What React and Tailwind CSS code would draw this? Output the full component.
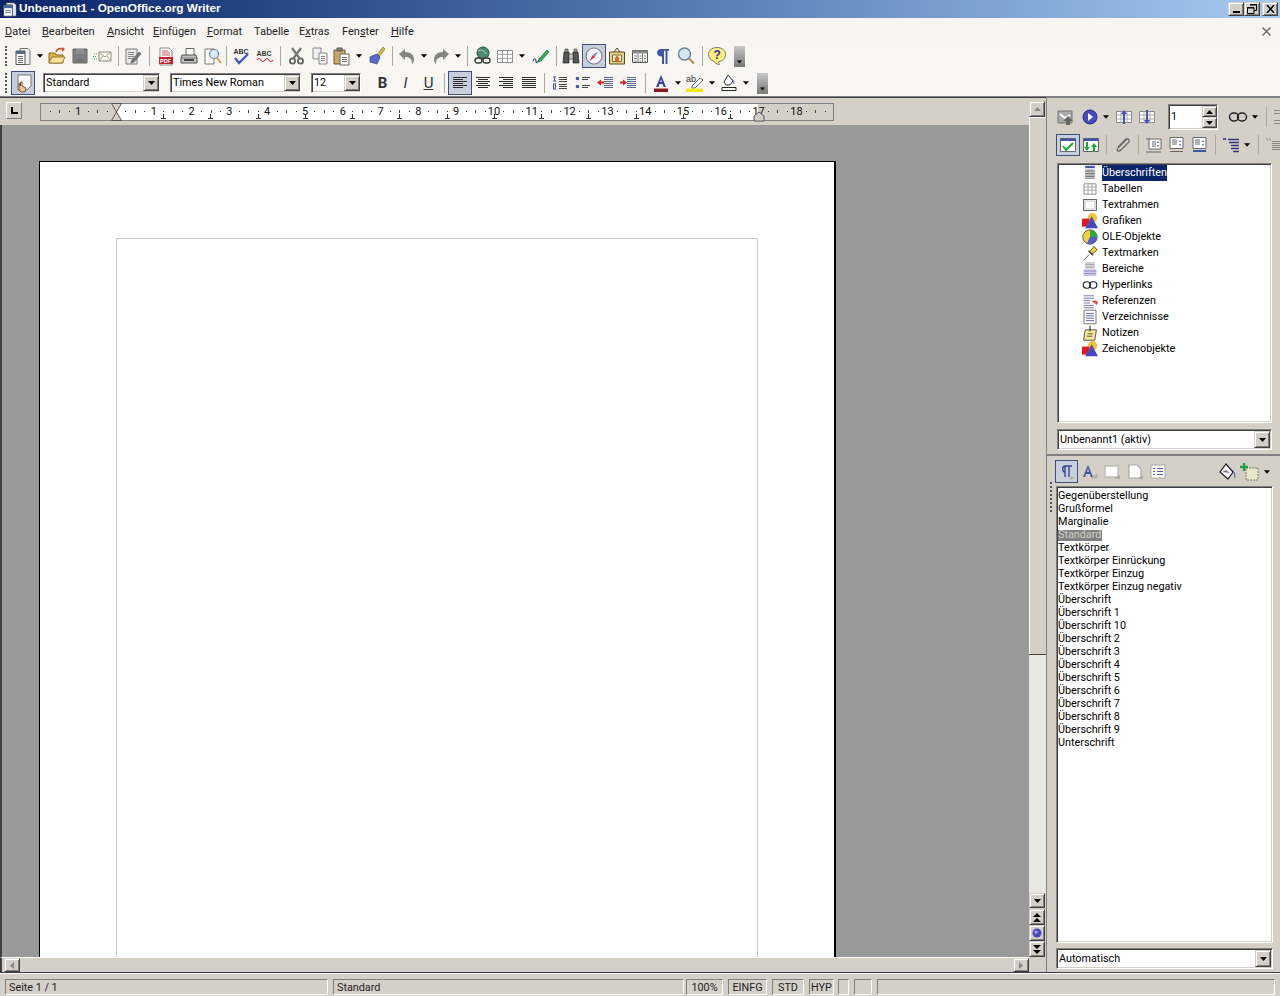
import React from "react";

const raised = "bg-[#d4d0c8] border border-t-[#d4d0c8] border-l-[#d4d0c8] border-r-[#404040] border-b-[#404040] shadow-[inset_1px_1px_0_#fff,inset_-1px_-1px_0_#808080]";
const sunken = "bg-white border border-t-[#808080] border-l-[#808080] border-r-white border-b-white shadow-[inset_1px_1px_0_#404040,inset_-1px_-1px_0_#d4d0c8]";
const active = "bg-[#c8cedb] border border-[#3f4f7c]";

const S = ({ children, s = 20, v = 20 }) => (
  <svg width={s} height={s} viewBox={`0 0 ${v} ${v}`} fill="none" className="block shrink-0">{children}</svg>
);
const Tri = ({ c = "#000", w = 7 }) => (
  <svg width={w} height="4" viewBox="0 0 7 4" className="block"><path d="M0 0h7L3.5 4z" fill={c} /></svg>
);

const Lines = ({ x, y, w, n, d = 2, c = "#555" }) => (
  <path d={Array.from({ length: n }, (_, i) => `M${x} ${y + i * d + 0.5}h${w}`).join("")} stroke={c} />
);

const IconNew = () => (
  <S><path d="M7 2.5h8l2 2v14H7z" fill="#eee" stroke="#777" /><path d="M3 5h9v13.5H3z" fill="#fff" stroke="#555" /><path d="M3 5h9v3H3z" fill="#5a6a84" /><Lines x={5} y={10} w={5} n={4} c="#667" /></S>
);
const IconOpen = () => (
  <S><path d="M2 7h6l1 2h7v8H2z" fill="#e0b04a" stroke="#8a6a20" /><path d="M2 17l3-6h13l-3 6z" fill="#fbe39a" stroke="#9a7a30" /><path d="M9 6c1-3 4-4 6-3" stroke="#d24a2a" strokeWidth="1.6" /><path d="M15 1l3 2-3 3z" fill="#d24a2a" /></S>
);
const IconSave = () => (
  <S><path d="M3 3h14v14H3z" fill="#7d7d7d" stroke="#6b6b6b" /><path d="M6 3h8v5H6z" fill="#8e8e8e" /><path d="M6 12h8v5H6z" fill="#747474" /></S>
);
const IconMail = () => (
  <S><path d="M6 6h12v9H6z" fill="#fffbe8" stroke="#888" /><path d="M6 6l6 5 6-5M6 15l4-5M18 15l-4-5" stroke="#999" /><path d="M1 8h3M0 10.500h4M1 13h3" stroke="#35c24a" strokeWidth="1.2" strokeDasharray="1 1" /></S>
);
const IconEdit = () => (
  <S><path d="M3 3h11v15H3z" fill="#e8e8e8" stroke="#7a7a7a" /><Lines x={5} y={6} w={6} n={4} d={2} c="#888" /><path d="M9 14l7-8 2 2-7 8-3 1z" fill="#777" stroke="#555" strokeWidth=".6" /></S>
);
const IconPdf = () => (
  <S><path d="M4 2h9l3 3v14H4z" fill="#fff" stroke="#888" /><path d="M6 5h6M6 7h8M6 9h8" stroke="#c55" /><path d="M3 11h14v7H3z" fill="#c8202a" /><text x="4" y="17" fontSize="5.500" fontWeight="700" fill="#fff" fontFamily="Liberation Sans">PDF</text></S>
);
const IconPrint = () => (
  <S><path d="M7 2.500h8v7H7z" fill="#fff" stroke="#666" /><path d="M3 9h14l1 3v5H2v-5z" fill="#c2c2c2" stroke="#555" /><path d="M2 12h16" stroke="#777" /><path d="M5 14h10" stroke="#444" strokeWidth="2" /></S>
);
const IconPreview = () => (
  <S><path d="M3 3h9v15H3z" fill="#fff" stroke="#777" /><circle cx="12" cy="8" r="4.500" fill="#d6ecf8" stroke="#6b7f95" strokeWidth="1.200" /><path d="M15 12l4 5" stroke="#caa24a" strokeWidth="2" /></S>
);
const IconSpell = () => (
  <S><text x="1.500" y="7.500" fontSize="7" fontWeight="700" fill="#333" fontFamily="Liberation Sans">ABC</text><path d="M3 12l4 5 9-9" stroke="#4a58c8" strokeWidth="2.400" /></S>
);
const IconAuto = () => (
  <S><text x="1.500" y="10" fontSize="7" fontWeight="700" fill="#333" fontFamily="Liberation Sans">ABC</text><path d="M2 14q2-3 4 0t4 0 4 0 4 0" stroke="#d03a3a" strokeWidth="1.200" /></S>
);
const IconCut = () => (
  <S><path d="M5 2l8 11M14 2L6 13" stroke="#777" strokeWidth="2.200" /><circle cx="5.500" cy="15" r="2.600" stroke="#666" strokeWidth="1.800" /><circle cx="13.500" cy="15" r="2.600" stroke="#666" strokeWidth="1.800" /></S>
);
const IconCopy = () => (
  <S><path d="M3 2h8v11H3z" fill="#eee" stroke="#8a8a8a" /><path d="M9 7h8v11H9z" fill="#f6f6f6" stroke="#8a8a8a" /><Lines x={11} y={10} w={4} n={3} c="#888" /></S>
);
const IconPaste = () => (
  <S><path d="M2 4h11v14H2z" fill="#c9a96a" stroke="#6b5a35" /><path d="M5 2h5v3H5z" fill="#888" stroke="#555" /><path d="M8 8h9v11H8z" fill="#fff" stroke="#666" /><Lines x={10} y={11} w={5} n={3} c="#666" /></S>
);
const IconBrush = () => (
  <S><path d="M11 9l6-8 2 2-6 8z" fill="#d8b84a" stroke="#8a7328" strokeWidth=".7" /><path d="M4 11l7-3 3 3-3 7-7-2z" fill="#5a6ac8" stroke="#39448e" strokeWidth=".8" /></S>
);
const IconUndo = ({ flip }) => (
  <S><g transform={flip ? "translate(20 0) scale(-1 1)" : undefined}><path d="M2 8l6-5v3c6 0 9 3 9 8 0 2-2 4-2 4 0-5-2-7-7-7v3z" fill="#858585" /></g></S>
);
const IconNav = () => (
  <S><circle cx="10" cy="7" r="6" fill="#4a8a6a" stroke="#2a5040" /><path d="M5 5c3-2 7 0 8 3" stroke="#bcd" /><rect x="2" y="12" width="7" height="5" rx="2.500" fill="#fff" stroke="#333" strokeWidth="1.300" /><rect x="10" y="12" width="7" height="5" rx="2.500" fill="#fff" stroke="#333" strokeWidth="1.300" /></S>
);
const IconTable = () => (
  <S><path d="M2.500 4.500h15v12h-15z" fill="#fff" stroke="#8b8b8b" /><path d="M2.500 8.500h15M2.500 12.500h15M7.500 4.500v12M12.500 4.500v12" stroke="#a2a2a2" /></S>
);
const IconDraw = () => (
  <S><path d="M2 15c1-3 3-3 3 0s2 1 3-1" stroke="#3a3a8a" strokeWidth="1.100" /><path d="M8 13l8-9 2 2-8 9-3 1z" fill="#30b050" stroke="#1a6a30" strokeWidth=".7" /></S>
);
const IconBinoc = () => (
  <S><path d="M3 6h5v11H2z" fill="#555" stroke="#222" strokeWidth=".7" /><path d="M12 6h5l1 11h-6z" fill="#555" stroke="#222" strokeWidth=".7" /><path d="M8 8h4v5H8z" fill="#ccc" stroke="#444" strokeWidth=".7" /><path d="M4 3h3v3H4zM13 3h3v3h-3z" fill="#999" stroke="#444" strokeWidth=".6" /></S>
);
const IconCompass = () => (
  <S><circle cx="10" cy="10" r="8" fill="#f4f6fa" stroke="#7a8290" strokeWidth="1.200" /><path d="M14.500 5L11 11 9 9z" fill="#7a8dc0" /><path d="M5.500 15L9 9l2 2z" fill="#d8202a" /></S>
);
const IconGallery = () => (
  <S><path d="M2.500 6h15v12h-15z" fill="#e8d28a" stroke="#5a4a20" /><path d="M7 6l3-4 3 4" stroke="#5a4a20" /><path d="M5.500 9h9v6.500h-9z" fill="#fff" stroke="#7a6a30" /><path d="M10 9.500l3 3h-1v3h-4v-3H7z" fill="#d86a20" /></S>
);
const IconData = () => (
  <S><path d="M2.500 4.500h15v12h-15z" fill="#fff" stroke="#555" /><path d="M2.500 4.500h15v3h-15z" fill="#888" /><path d="M8 7.500v9M12.500 7.500v9M4 10h3M4 12.500h3M4 15h3M9.500 10h2M9.500 12.500h2M9.500 15h2M14 10h2M14 12.500h2M14 15h2" stroke="#777" /></S>
);
const IconPil = () => (
  <S><path d="M8 3h8v1.800h-1.500V18h-2V4.800H11V18H9v-7.500c-3 0-5-1.500-5-3.700S6 3 8 3z" fill="#3d57a8" /></S>
);
const IconZoom = () => (
  <S><circle cx="8.500" cy="8" r="6" fill="#d3e7f5" stroke="#6f8296" strokeWidth="1.400" /><path d="M13 12.500l5 5" stroke="#b49a5a" strokeWidth="2.400" /></S>
);
const IconHelp = () => (
  <S><path d="M10 1.500c5 0 8.500 3 8.500 7s-3 7-7 7c0 2 1 3 1 3-3 0-5-2-6-3.500-3-1-5-3.500-5-6.500 0-4 3.500-7 8.500-7z" fill="#fff27a" stroke="#777" /><text x="6.500" y="13" fontSize="12" fontWeight="700" fill="#30309a" fontFamily="Liberation Sans">?</text></S>
);
const IconStyle = () => (
  <S><path d="M5 2h13v11l-4 4H5z" fill="#fff" stroke="#777" /><path d="M6 10v7l2 2h4l1-4-4-2V9H7.500v4z" fill="#f0c090" stroke="#5a3a20" strokeWidth=".8" /></S>
);
const Align = ({ m }) => {
  const d = {
    l: "M3 4.500h14M3 6.500h10M3 8.500h14M3 10.500h10M3 12.500h14M3 14.500h10",
    c: "M3 4.500h14M5 6.500h10M3 8.500h14M5 10.500h10M3 12.500h14M5 14.500h10",
    r: "M3 4.500h14M7 6.500h10M3 8.500h14M7 10.500h10M3 12.500h14M7 14.500h10",
    j: "M3 4.500h14M3 6.500h14M3 8.500h14M3 10.500h14M3 12.500h14M3 14.500h14",
  }[m];
  return <S><path d={d} stroke="#2c2c2c" /></S>;
};
const IconNum = () => (
  <S><path d="M3 4h3M4.500 4v4M3 8h3M3 11h3M3.500 11v5M5.500 11v5M3 16h3" stroke="#4452a8" /><path d="M9 4.500h8M9 6.500h8M9 8.500h8M9 11.500h8M9 13.500h8M9 15.500h8" stroke="#444" /></S>
);
const IconBul = () => (
  <S><circle cx="4.500" cy="5.500" r="1.800" fill="#4452a8" /><circle cx="4.500" cy="13.500" r="1.800" fill="#4452a8" /><path d="M9 4.500h8M9 6.500h6M9 12.500h8M9 14.500h6" stroke="#444" /></S>
);
const IconOut = () => (
  <S><path d="M8 4.500h9M8 6.500h9M8 8.500h9M8 10.500h9M8 12.500h9M8 14.500h9" stroke="#5a6890" /><path d="M1 9.500l4-3v2h3v2H5v2z" fill="#d0202a" /></S>
);
const IconInd = () => (
  <S><path d="M8 4.500h9M8 6.500h9M8 8.500h9M8 10.500h9M8 12.500h9M8 14.500h9" stroke="#5a6890" /><path d="M8 9.500l-4-3v2H1v2h3v2z" fill="#d0202a" /></S>
);
const IconFontColor = () => (
  <S><path d="M10 2L5 14h2.500l1-3h3l1 3H15zM9.200 9L10 6l.8 3z" fill="#35469c" /><path d="M3 15.500h14v3.500H3z" fill="#8a1420" /></S>
);
const IconHigh = () => (
  <S><text x="1" y="9" fontSize="9" fill="#333" fontFamily="Liberation Sans">ab</text><path d="M7 13l8-8 3 2-8 8-3 0z" fill="#fff" stroke="#555" strokeWidth=".9" /><path d="M1 15.500h17v3.500H1z" fill="#f2e81a" /></S>
);
const IconBg = () => (
  <S><path d="M9 2l5 6-3 4H7L5 9z" fill="#fff" stroke="#333" /><path d="M12 6c3 1 3 4 3 5" stroke="#4452a8" /><path d="M3 14.500h14v3H3z" fill="#fff" stroke="#222" /></S>
);
const Overflow = ({ cls }) => (
  <div className={`w-[11px] h-[21px] bg-gradient-to-b from-[#c8c8c8] to-[#787878] flex items-end justify-center pb-[3px] ${cls}`}>
    <Tri w={5} />
  </div>
);

const B = ({ w, on, children }) => (
  <div className={`${w} flex items-center justify-center h-[24px]`}>
    {on ? <div className={`${active} w-[24px] h-[24px] flex items-center justify-center shrink-0`}>{children}</div> : children}
  </div>
);
const Sep = ({ w = "w-[8px]" }) => (
  <div className={`${w} flex justify-center`}><div className="w-px h-[20px] bg-[#aaa9a4]" /></div>
);
const Ar = ({ w }) => <div className={`${w} flex justify-center`}><Tri w={6} /></div>;
const Grip = () => (
  <div className="w-[12px] flex justify-center"><div className="w-[2px] h-[20px] border-l-2 border-dotted border-[#555]" /></div>
);

const Combo = ({ w, mr, text }) => (
  <div className={`${w} ${mr} h-[20px] ${sunken} flex items-center justify-between pl-[2px]`}>
    <span className="pt-px whitespace-nowrap">{text}</span>
    <div className={`${raised} w-[16px] h-[16px] flex items-center justify-center shrink-0`}><Tri /></div>
  </div>
);

const TitleBtn = ({ children }) => (
  <div className={`${raised} w-[16px] h-[14px] flex items-center justify-center`}>{children}</div>
);

const Ruler = () => {
  const unit = 37.8;
  const x0 = 116;
  const marks = [];
  for (let i = -2; i <= 19; i++) {
    const x = x0 + i * unit;
    const n = Math.abs(i);
    if (i !== 0 && i > -2 && i !== 19) {
      marks.push(<text key={`n${i}`} x={x} y="12.500" textAnchor="middle" fontSize="11" fill="#111" fontFamily="Roboto">{n}</text>);
    }
    for (const f of [0.25, 0.75]) {
      const tx = x + f * unit;
      if (tx > 46 && tx < 830) marks.push(<rect key={`d${i}${f}`} x={Math.round(tx)} y="9" width="1" height="1" fill="#333" />);
    }
    const hx = Math.round(x + 0.5 * unit);
    if (hx > 40 && hx < 830) marks.push(<rect key={`h${i}`} x={hx} y="8" width="1" height="3" fill="#444" />);
  }
  for (let k = 1; k <= 13; k++) {
    const tx = Math.round(x0 + k * 47.244);
    marks.push(<path key={`t${k}`} d={`M${tx + 0.5} 12v4.500M${tx - 2} 16.500h5`} stroke="#333" />);
  }
  return (
    <svg width="800" height="22" viewBox="0 0 800 22" className="block">
      <g transform="translate(-36 0)">
        <rect x="40.500" y="1.500" width="793" height="17" fill="#fff" stroke="#808080" />
        <rect x="41" y="2" width="75" height="16" fill="#d4d0c8" />
        <rect x="758" y="2" width="75" height="16" fill="#d4d0c8" />
        {marks}
        <path d="M111.500 1.500h10l-5 8.500 5 8.500h-10l5-8.500z" fill="#d4d0c8" stroke="#555" />
        <path d="M754 19h10v-5l-5-4-5 4z" fill="#d4d0c8" stroke="#555" />
      </g>
    </svg>
  );
};

const ScrollBtn = ({ children, cls = "w-[16px] h-[16px]" }) => (
  <div className={`${raised} ${cls} flex items-center justify-center shrink-0`}>{children}</div>
);

function Shapes() {
  return (
    <S s={16}><circle cx="13" cy="6" r="6" fill="#f4c23a" /><path d="M0 7h9v10H0z" fill="#e01a1a" /><path d="M12 4l8 15H4z" fill="#4848c0" /></S>
  );
}

const navItems = [
  ["Überschriften", <S s={16}><path d="M4 2.500h12" stroke="#4452a8" strokeWidth="3" /><path d="M4 6.500h12M4 8.500h12M4 10.500h12M4 12.500h12M4 14.500h12M4 16.500h12" stroke="#444" /></S>],
  ["Tabellen", <S s={16}><path d="M2.500 3.500h15v13h-15z" fill="#fff" stroke="#777" /><path d="M2.500 7.500h15M2.500 11.500h15M7.500 3.500v13M12.500 3.500v13" stroke="#999" /></S>],
  ["Textrahmen", <S s={16}><path d="M2 3h16v14H2z" fill="#fff" stroke="#666" strokeWidth="1.300" /><path d="M4 5h12v10H4z" stroke="#bbb" /></S>],
  ["Grafiken", <Shapes />],
  ["OLE-Objekte", <S s={16}><circle cx="10" cy="10" r="9" fill="#f4d23a" stroke="#444" /><path d="M10 10V1a9 9 0 0 1 9 9z" fill="#2aa84a" /><path d="M10 10h9a9 9 0 0 1-13 8z" fill="#5a5ac8" /></S>],
  ["Textmarken", <S s={16}><path d="M9 9l6-7 4 4-7 6z" fill="#ecd83a" stroke="#333" /><path d="M8 7l6 6" stroke="#333" strokeWidth="1.500" /><path d="M9 12l-7 7" stroke="#333" /></S>],
  ["Bereiche", <S s={16}><path d="M4 2.500h12M4 4.500h12M4 6.500h12M4 8.500h12" stroke="#888" /><path d="M2 11.500h16M2 13.500h16M2 15.500h16M2 17.500h16" stroke="#6a6ab0" /></S>],
  ["Hyperlinks", <S s={16}><rect x="1.500" y="6" width="9" height="8" rx="4" stroke="#222" strokeWidth="1.400" /><rect x="9.500" y="6" width="9" height="8" rx="4" stroke="#222" strokeWidth="1.400" /></S>],
  ["Referenzen", <S s={16}><path d="M2 3.500h13M2 6.500h13M2 9.500h8M2 12.500h8M2 15.500h13M2 18.500h13" stroke="#5558a0" /><path d="M12 10h6v3M15 11.500l3 3 2-3z" fill="#d0202a" stroke="#d0202a" strokeWidth=".6" /></S>],
  ["Verzeichnisse", <S s={16}><path d="M2.500 1.500h15v17h-15z" fill="#fff" stroke="#555" /><path d="M5 5.500h10M5 8.500h10M5 11.500h10M5 14.500h10" stroke="#35469c" /></S>],
  ["Notizen", <S s={16}><path d="M4 6h14l-2 13H2z" fill="#f7ec9a" stroke="#333" /><path d="M7 11h7M6 14h7" stroke="#333" /><path d="M10 1v7" stroke="#333" strokeWidth="1.400" /></S>],
  ["Zeichenobjekte", <Shapes />],
];

const styles = ["Gegenüberstellung", "Grußformel", "Marginalie", "Standard", "Textkörper", "Textkörper Einrückung", "Textkörper Einzug", "Textkörper Einzug negativ", "Überschrift", "Überschrift 1", "Überschrift 10", "Überschrift 2", "Überschrift 3", "Überschrift 4", "Überschrift 5", "Überschrift 6", "Überschrift 7", "Überschrift 8", "Überschrift 9", "Unterschrift"];

const statusCells = [
  ["w-[323px] pl-[3px] mr-[5px]", "Seite 1 / 1"],
  ["w-[351px] pl-[3px] mr-[2px]", "Standard"],
  ["w-[37px] justify-center mr-[5px]", "100%"],
  ["w-[39px] justify-center mr-[5px]", "EINFG"],
  ["w-[32px] justify-center mr-[5px]", "STD"],
  ["w-[25px] justify-center mr-[4px]", "HYP"],
  ["w-[11px] mr-[5px]", ""],
  ["w-[18px] mr-[5px]", ""],
  ["w-[398px]", ""],
];

export default function App() {
  return (
    <div className="w-[1280px] h-[996px] overflow-hidden flex flex-col bg-[#d4d0c8] text-black text-[10.8px] leading-none font-['Roboto',sans-serif]">
      {/* title */}
      <div className="h-[18px] shrink-0 flex items-center bg-gradient-to-r from-[#0a246a] to-[#a6caf0] pl-[2px] pr-[2px]">
        <S s={16}><path d="M5 2h10l3 3v14H5z" fill="#dfe7f0" stroke="#223" /><path d="M2 5h11v14H2z" fill="#fff" stroke="#234" /><path d="M2 5h11v4H2z" fill="#4a6a94" /><path d="M4 12h7M4 14.500h7" stroke="#456" /></S>
        <span className="ml-px font-bold text-white text-[11.8px] font-['Liberation_Sans',sans-serif]">Unbenannt1 - OpenOffice.org Writer</span>
        <div className="ml-auto flex">
          <TitleBtn><div className="w-[7px] h-[2px] bg-black mt-[6px]" /></TitleBtn>
          <TitleBtn>
            <svg width="10" height="10" viewBox="0 0 10 10" className="block"><path d="M3 .500h6.500v6H7M.500 3.500h6.500v6H.500z" stroke="#000" fill="none" /><path d="M3 1h6.500M.500 4h6.500" stroke="#000" /></svg>
          </TitleBtn>
          <div className="ml-[2px]">
            <TitleBtn>
              <svg width="9" height="8" viewBox="0 0 9 8" className="block"><path d="M1 0l7 8M8 0L1 8" stroke="#000" strokeWidth="1.500" /></svg>
            </TitleBtn>
          </div>
        </div>
      </div>
      {/* menu */}
      <div className="h-[26px] shrink-0 flex items-center bg-[#f6f5f2] pl-[5px] pr-[7px] pt-[1px] text-[11px] text-[#222]">
        <span className="w-[37px]"><u>D</u>atei</span>
        <span className="w-[65px]"><u>B</u>earbeiten</span>
        <span className="w-[46px]"><u>A</u>nsicht</span>
        <span className="w-[54px]"><u>E</u>infügen</span>
        <span className="w-[47px]"><u>F</u>ormat</span>
        <span className="w-[45px]">Tabelle</span>
        <span className="w-[43px]">E<u>x</u>tras</span>
        <span className="w-[49px]">Fen<u>s</u>ter</span>
        <span><u>H</u>ilfe</span>
        <svg width="9" height="9" viewBox="0 0 9 9" className="block ml-auto mr-[2px]"><path d="M.500.500l8 8M8.500.500l-8 8" stroke="#666" strokeWidth="1.300" /></svg>
      </div>
      {/* toolbar 1 */}
      <div className="h-[26px] shrink-0 flex items-center bg-[#f7f6f3] pb-[2px]">
        <Grip />
        <B w="w-[22px]"><IconNew /></B><Ar w="w-[12px]" />
        <B w="w-[22px]"><IconOpen /></B>
        <B w="w-[23px]"><IconSave /></B>
        <B w="w-[23px]"><IconMail /></B>
        <Sep />
        <B w="w-[22px]"><IconEdit /></B>
        <Sep w="w-[10px]" />
        <B w="w-[23px]"><IconPdf /></B>
        <B w="w-[23px]"><IconPrint /></B>
        <B w="w-[23px]"><IconPreview /></B>
        <Sep w="w-[7px]" />
        <B w="w-[23px]"><IconSpell /></B>
        <B w="w-[23px]"><IconAuto /></B>
        <Sep w="w-[9px]" />
        <B w="w-[23px]"><IconCut /></B>
        <B w="w-[23px]"><IconCopy /></B>
        <B w="w-[22px]"><IconPaste /></B><Ar w="w-[11px]" />
        <B w="w-[24px]"><IconBrush /></B>
        <Sep />
        <B w="w-[22px]"><IconUndo /></B><Ar w="w-[11px]" />
        <B w="w-[23px]"><IconUndo flip /></B><Ar w="w-[11px]" />
        <Sep w="w-[9px]" />
        <B w="w-[22px]"><IconNav /></B>
        <B w="w-[22px]"><IconTable /></B><Ar w="w-[12px]" />
        <B w="w-[25px]"><IconDraw /></B>
        <Sep w="w-[7px]" />
        <B w="w-[22px]"><IconBinoc /></B>
        <B w="w-[24px]" on><IconCompass /></B>
        <B w="w-[22px]"><IconGallery /></B>
        <B w="w-[24px]"><IconData /></B>
        <B w="w-[22px]"><IconPil /></B>
        <B w="w-[24px]"><IconZoom /></B>
        <Sep />
        <B w="w-[22px]"><IconHelp /></B>
        <Overflow cls="ml-[6px]" />
      </div>
      {/* toolbar 2 */}
      <div className="h-[27px] shrink-0 flex items-center bg-[#f7f6f3] border-b border-[#808080]">
        <Grip />
        <B w="w-[22px]" on><IconStyle /></B>
        <div className="w-[9px]" />
        <Combo w="w-[117px]" mr="mr-[10px]" text="Standard" />
        <Combo w="w-[131px]" mr="mr-[10px]" text="Times New Roman" />
        <Combo w="w-[50px]" mr="mr-[10px]" text="12" />
        <div className="w-[23px] text-center font-bold text-[15px] text-[#333]">B</div>
        <div className="w-[23px] text-center italic text-[15px] text-[#333]">I</div>
        <div className="w-[23px] text-center underline text-[15px] text-[#333]">U</div>
        <Sep w="w-[8px]" />
        <B w="w-[23px]" on><Align m="l" /></B>
        <B w="w-[23px]"><Align m="c" /></B>
        <B w="w-[23px]"><Align m="r" /></B>
        <B w="w-[23px]"><Align m="j" /></B>
        <Sep w="w-[8px]" />
        <B w="w-[23px]"><IconNum /></B>
        <B w="w-[23px]"><IconBul /></B>
        <B w="w-[23px]"><IconOut /></B>
        <B w="w-[23px]"><IconInd /></B>
        <Sep w="w-[10px]" />
        <B w="w-[22px]"><IconFontColor /></B><Ar w="w-[12px]" />
        <B w="w-[22px]"><IconHigh /></B><Ar w="w-[12px]" />
        <B w="w-[22px]"><IconBg /></B><Ar w="w-[12px]" />
        <Overflow cls="ml-[5px]" />
      </div>

      {/* main */}
      <div className="flex-1 min-h-0 flex">
        {/* left */}
        <div className="w-[1046px] shrink-0 flex flex-col">
          <div className="flex-1 min-h-0 flex">
            <div className="w-[1029px] shrink-0 flex flex-col">
              <div className="h-[28px] shrink-0 flex items-start pt-[4px] border-t border-[#404040]">
                <div className="w-[6px]" />
                <div className="w-[16px] h-[17px] bg-[#d4d0c8] flex items-center justify-center border border-white border-r-[#808080] border-b-[#808080]">
                  <svg width="7" height="7" viewBox="0 0 7 7" className="block"><path d="M1 0v6h6" stroke="#000" strokeWidth="2" fill="none" /></svg>
                </div>
                <div className="w-[14px]" />
                <Ruler />
              </div>
              <div className="flex-1 min-h-0 bg-[#999] overflow-hidden pt-[36px] pl-[37px] border-l-2 border-[#404040]">
                <div className="w-[797px] h-[900px] bg-white border-t border-l border-black border-r-2 pt-[76px] pl-[76px]">
                  <div className="w-[642px] h-[800px] border border-[#c8c8c8]" />
                </div>
              </div>
            </div>
            <div className="w-[17px] shrink-0 flex flex-col pt-[3px] border-t border-[#404040]">
              <ScrollBtn cls="w-[16px] h-[16px]"><svg width="7" height="4" viewBox="0 0 7 4" className="block"><path d="M3.500 0L7 4H0z" fill="#888" /></svg></ScrollBtn>
              <div className="h-[538px] bg-[#d4d0c8] border-b border-[#404040] shadow-[inset_1px_1px_0_#fff]" />
              <div className="flex-1 bg-[#e9e7e2]" />
              <ScrollBtn cls="w-[16px] h-[15px]"><Tri /></ScrollBtn>
              <ScrollBtn cls="w-[16px] h-[16px] mt-px"><svg width="8" height="9" viewBox="0 0 8 9" className="block"><path d="M4 0l4 4H0zM4 5l4 4H0z" fill="#000" /></svg></ScrollBtn>
              <ScrollBtn><svg width="10" height="10" viewBox="0 0 10 10" className="block"><circle cx="5" cy="5" r="4.500" fill="#4a4ac0" /><circle cx="4" cy="4" r="1.500" fill="#b0b0ff" /></svg></ScrollBtn>
              <ScrollBtn><svg width="8" height="9" viewBox="0 0 8 9" className="block"><path d="M0 0h8L4 4zM0 5h8L4 9z" fill="#000" /></svg></ScrollBtn>
            </div>
          </div>
          <div className="h-[15px] shrink-0 flex items-start">
            <div className="w-[1029px] flex h-[15px] pl-[2px] border-t border-[#fff] border-l-2 border-l-[#404040]">
              <ScrollBtn cls="w-[16px] h-[14px]">
                <svg width="4" height="7" viewBox="0 0 4 7" className="block"><path d="M4 0v7L0 3.500z" fill="#888" /></svg>
              </ScrollBtn>
              <div className="flex-1" />
              <ScrollBtn cls="w-[16px] h-[14px]">
                <svg width="4" height="7" viewBox="0 0 4 7" className="block"><path d="M0 0v7l4-3.500z" fill="#888" /></svg>
              </ScrollBtn>
            </div>
          </div>
        </div>

        {/* right panel */}
        <div className="w-[234px] min-w-0 overflow-hidden flex flex-col border-t border-l border-[#808080]">
          {/* navigator */}
          <div className="h-[358px] shrink-0 flex flex-col pl-[10px] pr-[8px] border-b-2 border-[#808080] overflow-hidden">
            <div className="h-[33px] shrink-0 flex items-center pt-[5px] w-[230px] -ml-px">
              <div className="w-[20px] flex justify-center"><S><path d="M2 4h14v12H2z" fill="#aaa" stroke="#777" /><path d="M4 7l5 4 5-3" stroke="#fff" strokeWidth="2" /><path d="M12 9l5 5h-3v4h-4v-4H7z" fill="#666" /></S></div>
              <div className="w-[24px] flex justify-center ml-[2px]"><S><circle cx="10" cy="10" r="7" fill="#4a4ac0" stroke="#2a2a80" /><path d="M8 6l5 4-5 4z" fill="#fff" /></S></div>
              <Ar w="w-[8px]" />
              <div className="w-[28px] flex justify-center"><S><path d="M2.500 4.500h15v11h-15z" fill="#fff" stroke="#888" /><path d="M7 4.500v11M13 4.500v11M2.500 8h15M2.500 12h15" stroke="#aaa" /><path d="M10 3l3 4h-2v10H9V7H7z" fill="#4452a8" /></S></div>
              <div className="w-[18px] flex justify-center"><S><path d="M2.500 4.500h15v11h-15z" fill="#fff" stroke="#888" /><path d="M7 4.500v11M13 4.500v11M2.500 8h15M2.500 12h15" stroke="#aaa" /><path d="M10 17l3-4h-2V3H9v10H7z" fill="#4452a8" /></S></div>
              <div className="w-[12px]" />
              <div className={`w-[50px] h-[26px] ${sunken} flex items-center pl-[2px] shrink-0`}>
                <span className="flex-1">1</span>
                <div className="flex flex-col w-[15px] h-[22px]">
                  <div className={`${raised} h-[11px] flex items-center justify-center`}><svg width="7" height="4" viewBox="0 0 7 4" className="block"><path d="M3.500 0L7 4H0z" fill="#000" /></svg></div>
                  <div className={`${raised} h-[11px] flex items-center justify-center`}><Tri /></div>
                </div>
              </div>
              <div className="w-[7px]" />
              <div className="w-[26px] flex justify-center"><S><rect x="1.500" y="6" width="9" height="8" rx="4" stroke="#222" strokeWidth="1.400" /><rect x="9.500" y="6" width="9" height="8" rx="4" stroke="#222" strokeWidth="1.400" /></S></div>
              <Ar w="w-[8px]" />
              <Sep w="w-[14px]" />
              <div className="w-[6px] h-[14px] ml-[1px] border-y-4 border-double border-[#888]" />
            </div>
            <div className="h-[32px] shrink-0 flex items-center pb-[4px] w-[230px] -ml-px">
              <div className={`${active} w-[24px] h-[22px] flex items-center justify-center shrink-0`}><S><path d="M2.500 3.500h15v13h-15z" fill="#fff" stroke="#666" /><path d="M2.500 3.500h15v2.500h-15z" fill="#4452a8" /><path d="M5 11l3 4 7-7" stroke="#18b030" strokeWidth="2" /></S></div>
              <div className="w-[22px] flex justify-center"><S><path d="M2.500 3.500h15v13h-15z" fill="#fff" stroke="#666" /><path d="M2.500 3.500h15v2.500h-15z" fill="#4452a8" /><path d="M7 7v5h2l-3 4-3-4h2V7zM14 17v-5h2l-3-4-3 4h2v5z" fill="#18a838" /></S></div>
              <Sep w="w-[8px]" />
              <div className="w-[24px] flex justify-center"><S><path d="M15 4l-9 9c-2 3 1 4 3 2l8-8c1-3-2-4-3-3l-8 8" stroke="#666" strokeWidth="1.300" /></S></div>
              <Sep w="w-[8px]" />
              <div className="w-[23px] flex justify-center"><S><path d="M5 4h12v10H5zM2 4h4M2 17h15" stroke="#666" fill="#fff" /><path d="M8 7h4M8 9h4M8 11h4" stroke="#666" /><path d="M14 6l-1 2h2zM14 12l-1-2h2z" fill="#4452a8" /></S></div>
              <div className="w-[23px] flex justify-center"><S><path d="M3 2.500h13v11H3z" stroke="#666" fill="#fff" /><path d="M5 5h5M5 7h5M5 9h5M3 16.500h13" stroke="#666" /><path d="M13 5l-1 2h2zM13 11l-1-2h2z" fill="#4452a8" /></S></div>
              <div className="w-[23px] flex justify-center"><S><path d="M3 2.500h13v11H3z" stroke="#666" fill="#fff" /><path d="M5 5h5M5 7h5M5 9h5" stroke="#666" /><path d="M3 16h13" stroke="#4452a8" strokeWidth="2" /><path d="M13 5l-1 2h2zM13 11l-1-2h2z" fill="#4452a8" /></S></div>
              <Sep w="w-[8px]" />
              <div className="w-[24px] flex justify-center"><S><path d="M2 4h3" stroke="#4452a8" strokeWidth="2" /><path d="M7 4.500h11M8 7.500h10M10 10.500h8M10 13.500h8M12 16.500h6" stroke="#35357a" strokeWidth="1.500" /></S></div>
              <Ar w="w-[8px]" />
              <Sep w="w-[14px]" />
              <svg width="16" height="20" viewBox="0 0 16 20" className="block"><path d="M1 3l2 3M4 3l2 3" stroke="#999" /><path d="M7 6.500h9M7 8.500h9M7 10.500h9M7 12.500h9M7 14.500h9" stroke="#888" /></svg>
            </div>
            <div className={`h-[260px] shrink-0 ${sunken} flex flex-col pt-px`}>
              {navItems.map(([t, ic], i) => (
                <div key={t} className="h-[16px] flex items-center shrink-0 pl-[24px]">
                  <div className="w-[16px] flex justify-center">{ic}</div>
                  <span className={i === 0 ? "ml-[4px] h-[16px] w-[65px] flex items-center bg-[#0a246a] text-white whitespace-nowrap" : "ml-[3px] pl-px"}>{t}</span>
                </div>
              ))}
            </div>
            <div className={`h-[21px] mt-[6px] shrink-0 ${sunken} flex items-center justify-between pl-[2px] pr-px`}>
              <span className="pt-[2px]">Unbenannt1 (aktiv)</span>
              <div className={`${raised} w-[16px] h-[17px] flex items-center justify-center shrink-0`}><Tri /></div>
            </div>
          </div>
          {/* styles */}
          <div className="flex-1 min-h-0 flex">
            <div className="w-[8px] flex flex-col justify-center items-center shrink-0 pb-[435px]">
              <div className="w-[2px] h-[30px] border-l-2 border-dotted border-[#555]" />
            </div>
            <div className="flex-1 flex flex-col pr-[7px] pl-px min-w-0">
              <div className="h-[29px] shrink-0 flex items-center pt-[2px] -ml-px">
                <div className={`${active} w-[23px] h-[23px] flex items-center justify-center shrink-0`}><S><path d="M8 4h7M8 4c-3 0-3 6 0 6zM8 4v11M12 4v11" stroke="#35469c" strokeWidth="1.400" /><path d="M13 15h5l-5 3z" fill="#aaa" /></S></div>
                <div className="w-[23px] flex justify-center"><S><path d="M9 3L4 15h2l1-3h4l1 3h2zM8 10l1-4 1 4z" fill="#4452a8" /><path d="M12 16h6v-4z" fill="#bbb" stroke="#999" strokeWidth=".5" /></S></div>
                <div className="w-[23px] flex justify-center"><S><path d="M3 4h13v11H3z" fill="#fff" stroke="#bbb" strokeWidth="1.400" /><path d="M12 17h6v-4z" fill="#aaa" /></S></div>
                <div className="w-[23px] flex justify-center"><S><path d="M4 3h8l4 4v9H4z" fill="#fff" stroke="#aaa" strokeWidth="1.200" /><path d="M12 17h6v-4z" fill="#aaa" /></S></div>
                <div className="w-[23px] flex justify-center"><S><path d="M3 3h14v13H3z" fill="#fff" stroke="#aaa" /><path d="M5 6.500h2M9 6.500h6M5 9.500h2M9 9.500h6M5 12.500h2M9 12.500h6" stroke="#5a5ab0" /></S></div>
                <div className="w-[47px]" />
                <div className="w-[23px] flex justify-center"><S><path d="M9 2l7 8-5 7-8-7z" fill="#fff" stroke="#222" strokeWidth="1.200" /><path d="M9 8l-4 2 8 1z" fill="#777" /><path d="M15 8c2 1 3 4 3 8" stroke="#4452a8" /></S></div>
                <div className="w-[23px] flex justify-center"><S><path d="M6 6h12v12H6z" fill="#ece6c8" stroke="#777" strokeDasharray="2 1" /><path d="M4 1v8M0 5h8" stroke="#20a040" strokeWidth="2.400" /></S></div>
                <Ar w="w-[12px]" />
              </div>
              <div className={`h-[457px] shrink-0 mt-px ${sunken} pt-[3px] pl-px flex flex-col`}>
                {styles.map((t) => (
                  <div key={t} className="h-[13px] flex items-center shrink-0">
                    <span className={t === "Standard" ? "bg-[#808080] text-[#d4d0c8] pr-px" : ""}>{t}</span>
                  </div>
                ))}
              </div>
              <div className={`h-[21px] mt-[5px] shrink-0 ${sunken} flex items-center justify-between pl-[2px] pr-px`}>
                <span className="pt-[2px]">Automatisch</span>
                <div className={`${raised} w-[16px] h-[17px] flex items-center justify-center shrink-0`}><Tri /></div>
              </div>
            </div>
          </div>
        </div>
      </div>

      {/* status */}
      <div className="h-[24px] shrink-0 flex flex-col border-t border-[#404040]">
        <div className="h-[2px] border-t border-white" />
        <div className="flex-1 flex pl-[5px] pt-[4px] pb-px text-[#222]">
          {statusCells.map(([c, t], i) => (
            <div key={i} className={`${c} flex items-center pt-[2px] border border-t-[#808080] border-l-[#808080] border-r-white border-b-white`}>{t}</div>
          ))}
        </div>
      </div>
    </div>
  );
}
